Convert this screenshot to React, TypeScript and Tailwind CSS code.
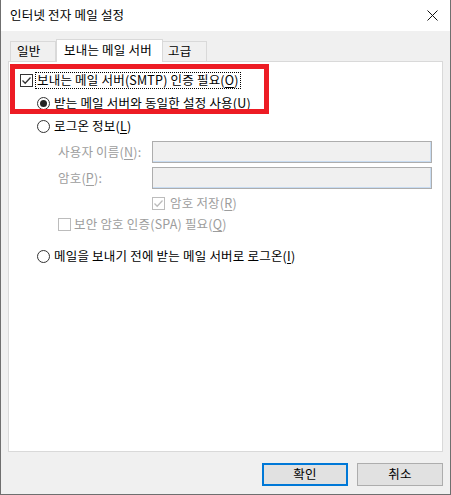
import React from 'react'

const font = { fontFamily: '"Noto Sans CJK KR", "Malgun Gothic", sans-serif' }

const Check: React.FC<{ checked?: boolean; disabled?: boolean }> = ({ checked, disabled }) => (
  <span
    className={`flex h-[13px] w-[13px] shrink-0 items-center justify-center border bg-white ${
      disabled ? 'border-[#bcbcbc]' : 'border-[#333333]'
    }`}
  >
    {checked && (
      <svg width="11" height="11" viewBox="0 0 11 11">
        <polyline
          points="1.5,5.5 4.2,8.2 9.5,2.5"
          fill="none"
          stroke={disabled ? '#bcbcbc' : '#333333'}
          strokeWidth="1.3"
        />
      </svg>
    )}
  </span>
)

const Radio: React.FC<{ checked?: boolean }> = ({ checked }) => (
  <span className="flex h-[13px] w-[13px] shrink-0 items-center justify-center rounded-full border border-[#333333] bg-white">
    {checked && <span className="h-[7px] w-[7px] rounded-full bg-[#222222]" />}
  </span>
)

const Mn: React.FC<{ k: string }> = ({ k }) => (
  <>
    (<u className="underline-offset-2">{k}</u>)
  </>
)

const Field: React.FC<{ label: React.ReactNode; className?: string }> = ({ label, className }) => (
  <div className={`flex items-center ${className ?? ''}`}>
    <span className="box-content shrink-0 pl-[49px] text-[#9d9d9d]" style={{ width: 94 }}>
      {label}
    </span>
    <div className="h-[22px] w-[280px] border border-[#adadad] bg-[#f0f0f0] shadow-[inset_-1px_-1px_0_#c8dcf2]" />
  </div>
)

export default function App() {
  return (
    <div
      style={font}
      className="flex h-[495px] w-[451px] flex-col border-x border-b border-x-[#6f6f6f] border-b-[#6f6f6f] bg-[#f0f0f0] text-[12.5px] leading-none tracking-[0.2px] text-black"
    >
      {/* title bar */}
      <div className="flex h-[31px] shrink-0 items-center justify-between bg-white pl-[9px] pr-[12px]">
        <span>인터넷 전자 메일 설정</span>
        <svg width="11" height="11" viewBox="0 0 11 11">
          <path d="M0.5 0.5 L10.5 10.5 M10.5 0.5 L0.5 10.5" stroke="#111" strokeWidth="1" />
        </svg>
      </div>

      {/* tabs */}
      <div className="relative z-10 mt-[8px] flex h-[23px] items-end pl-[9px]">
        <div className="mb-[1px] flex h-[20px] w-[46px] items-center border-x border-t border-[#d9d9d9] pl-[6px]">
          일반
        </div>
        <div className="flex h-[23px] w-[107px] items-center border-x border-t border-[#d9d9d9] bg-white pb-[2px] pl-[7px]">
          보내는 메일 서버
        </div>
        <div className="mb-[1px] flex h-[20px] w-[44px] items-center border-r border-t border-[#d9d9d9] pl-[5px]">
          고급
        </div>
      </div>

      {/* panel */}
      <div className="relative mx-[7px] -mt-[1px] flex h-[391px] flex-col border border-[#d9d9d9] bg-white pt-[7px]">
        <div className="flex h-[23px] items-center pl-[11px]">
          <Check checked />
          <span className="ml-[2px] border border-dotted border-black px-[1px] py-[1px]">
            보내는 메일 서버(SMTP) 인증 필요<Mn k="O" />
          </span>
        </div>
        <div className="flex h-[23px] items-center pl-[28px]">
          <Radio checked />
          <span className="ml-[4px]">
            받는 메일 서버와 동일한 설정 사용<Mn k="U" />
          </span>
        </div>
        <div className="flex h-[23px] items-center pl-[28px]">
          <Radio />
          <span className="ml-[4px]">
            로그온 정보<Mn k="L" />
          </span>
        </div>

        <Field className="mt-[3px]" label={<>사용자 이름<Mn k="N" />:</>} />
        <Field className="mt-[4px]" label={<>암호<Mn k="P" />:</>} />

        <div className="mt-[3px] flex h-[22px] items-center pl-[143px] text-[#9d9d9d]">
          <Check checked disabled />
          <span className="ml-[5px]">
            암호 저장<Mn k="R" />
          </span>
        </div>
        <div className="flex h-[21px] items-center pl-[49px] text-[#9d9d9d]">
          <Check disabled />
          <span className="ml-[3px]">
            보안 암호 인증(SPA) 필요<Mn k="Q" />
          </span>
        </div>

        <div className="mt-[10px] flex h-[22px] items-center pl-[28px]">
          <Radio />
          <span className="ml-[4px]">
            메일을 보내기 전에 받는 메일 서버로 로그온<Mn k="I" />
          </span>
        </div>

        {/* annotation box */}
        <div className="pointer-events-none absolute left-[1px] top-[2px] h-[50px] w-[259px] border-[5px] border-[#ed1c24]" />
      </div>

      {/* buttons */}
      <div className="mt-[11px] flex justify-end gap-[9px] pr-[7px]">
        <button className="flex h-[23px] w-[86px] items-center justify-center border-2 border-[#0078d7] bg-[#e1e1e1]">
          확인
        </button>
        <button className="flex h-[23px] w-[86px] items-center justify-center border border-[#adadad] bg-[#e1e1e1]">
          취소
        </button>
      </div>
    </div>
  )
}
